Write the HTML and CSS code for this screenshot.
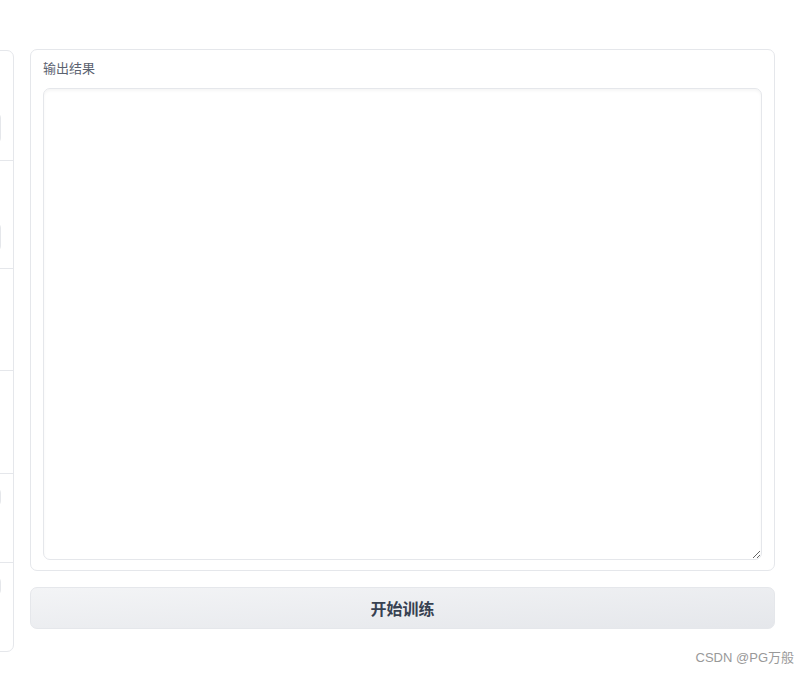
FILE: index.html
```html
<!DOCTYPE html>
<html>
<head>
    <link rel="stylesheet" href="styles.css">
</head>
<body>
<div class="page">
    <div class="params-panel">
        <div class="param-block block-a">
            <div class="param-input"></div>
        </div>
        <div class="param-block block-b">
            <div class="param-input"></div>
        </div>
        <div class="param-block block-c"></div>
        <div class="param-block block-d"></div>
        <div class="param-block block-e">
            <div class="param-input small"></div>
        </div>
        <div class="param-block block-f">
            <div class="param-input small"></div>
        </div>
    </div>

    <div class="main-col">
        <div class="output-card">
            <label class="output-label" for="output">输出结果</label>
            <textarea id="output" class="output-box"></textarea>
        </div>
        <button class="train-btn">开始训练</button>
    </div>
</div>

<div class="watermark">CSDN @PG万般</div>
</body>
</html>
```

FILE: styles.css
```css
* {
    margin: 0;
    padding: 0;
    box-sizing: border-box;
    font-family: "Liberation Sans", "Noto Sans CJK SC", sans-serif;
}

body {
    width: 809px;
    height: 674px;
    background: white;
    overflow: hidden;
    position: relative;
}

.page {
    display: flex;
    align-items: flex-start;
    gap: 16px;
    padding-top: 49px;
}

/* Parameter panel, mostly cut off on the left */
.params-panel {
    width: 200px;
    margin-left: -186px;
    margin-top: 1px;
    border: 1px solid #e5e7eb;
    border-radius: 7px;
    background: white;
}

.param-block {
    padding: 0 12px;
    display: flex;
    flex-direction: column;
}

.param-block:not(:last-child) {
    border-bottom: 1px solid #e5e7eb;
}

.block-a { height: 110px; padding-top: 61px; }
.block-b { height: 108px; padding-top: 61px; }
.block-c { height: 102px; }
.block-d { height: 103px; }
.block-e { height: 89px; padding-top: 13px; }
.block-f { height: 88px; padding-top: 13px; }

.param-input {
    height: 32px;
    border: 1px solid #e5e7eb;
    border-radius: 6px;
}

.block-b .param-input {
    height: 30px;
}

.param-input.small {
    height: 20px;
}

/* Output card */
.main-col {
    width: 745px;
    display: flex;
    flex-direction: column;
    gap: 16px;
}

.output-card {
    border: 1px solid #e5e7eb;
    border-radius: 7px;
    padding: 9px 12px 10px;
    background: white;
    display: flex;
    flex-direction: column;
}

.output-label {
    font-size: 13px;
    line-height: 20px;
    color: #5b6270;
    margin-bottom: 9px;
}

.output-box {
    height: 472px;
    width: 100%;
    border: 1px solid #e5e7eb;
    border-radius: 7px;
    box-shadow: inset 0 2px 3px rgba(0, 0, 0, 0.04);
    background: white;
    outline: none;
    font-size: 14px;
    padding: 8px 10px;
}

.train-btn {
    height: 42px;
    width: 100%;
    border: 1px solid #e5e7eb;
    border-radius: 7px;
    background: linear-gradient(to bottom right, #f3f4f6, #e5e7eb);
    font-size: 16px;
    font-weight: 700;
    color: #374151;
    cursor: pointer;
}

.watermark {
    position: absolute;
    right: 15px;
    top: 649px;
    font-size: 13px;
    line-height: 18px;
    color: #999999;
}
```
